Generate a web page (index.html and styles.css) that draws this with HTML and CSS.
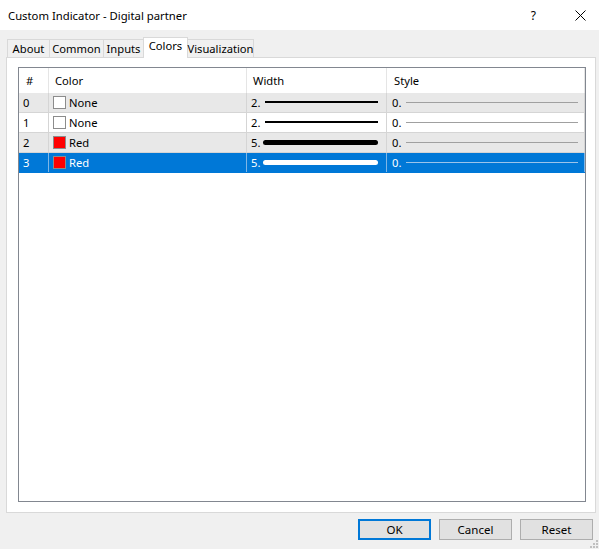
FILE: index.html
```html
<!DOCTYPE html>
<html>
<head>
<meta charset="utf-8">
<link rel="stylesheet" href="styles.css">
</head>
<body>
<div class="window">
  <div class="titlebar">
    <span class="title">Custom Indicator - Digital partner</span>
    <span class="help">?</span>
    <svg class="close" width="11" height="11" viewBox="0 0 11 11"><path d="M0.5 0.5 L10.5 10.5 M10.5 0.5 L0.5 10.5" stroke="#000" stroke-width="1" fill="none"/></svg>
  </div>
  <div class="body">
    <div class="tabs">
      <div class="tab t-about">About</div>
      <div class="tab t-common">Common</div>
      <div class="tab t-inputs">Inputs</div>
      <div class="tab t-colors active">Colors</div>
      <div class="tab t-vis">Visualization</div>
    </div>
    <div class="panel">
      <div class="list">
        <div class="row head">
          <div class="cell c-num">#</div>
          <div class="cell c-color">Color</div>
          <div class="cell c-width">Width</div>
          <div class="cell c-style">Style</div>
        </div>
        <div class="row alt">
          <div class="cell c-num">0</div>
          <div class="cell c-color"><span class="swatch none"></span>None</div>
          <div class="cell c-width"><span class="num">2.</span><span class="wline w2"></span></div>
          <div class="cell c-style"><span class="num">0.</span><span class="sline"></span></div>
        </div>
        <div class="row">
          <div class="cell c-num">1</div>
          <div class="cell c-color"><span class="swatch none"></span>None</div>
          <div class="cell c-width"><span class="num">2.</span><span class="wline w2"></span></div>
          <div class="cell c-style"><span class="num">0.</span><span class="sline"></span></div>
        </div>
        <div class="row alt">
          <div class="cell c-num">2</div>
          <div class="cell c-color"><span class="swatch red"></span>Red</div>
          <div class="cell c-width"><span class="num">5.</span><span class="wline w5"></span></div>
          <div class="cell c-style"><span class="num">0.</span><span class="sline"></span></div>
        </div>
        <div class="row selected">
          <div class="cell c-num">3</div>
          <div class="cell c-color"><span class="swatch red"></span>Red</div>
          <div class="cell c-width"><span class="num">5.</span><span class="wline w5"></span></div>
          <div class="cell c-style"><span class="num">0.</span><span class="sline"></span></div>
        </div>
      </div>
    </div>
    <div class="footer">
      <button class="btn default">OK</button>
      <button class="btn">Cancel</button>
      <button class="btn">Reset</button>
    </div>
  </div>
  <svg class="grip" width="8" height="8" viewBox="0 0 8 8">
    <rect x="6" y="0" width="2" height="2" fill="#c0c0c0"/>
    <rect x="3" y="3" width="2" height="2" fill="#c0c0c0"/>
    <rect x="6" y="3" width="2" height="2" fill="#c0c0c0"/>
    <rect x="0" y="6" width="2" height="2" fill="#c0c0c0"/>
    <rect x="3" y="6" width="2" height="2" fill="#c0c0c0"/>
    <rect x="6" y="6" width="2" height="2" fill="#c0c0c0"/>
  </svg>
</div>
</body>
</html>
```

FILE: styles.css
```css
* { box-sizing: border-box; }
html, body {
  margin: 0;
  padding: 0;
}
body {
  font-family: "Noto Sans", "DejaVu Sans", sans-serif;
  font-size: 11.2px;
  color: #000;
  background: #f0f0f0;
}
.window {
  position: relative;
  width: 599px;
  height: 549px;
  background: #f0f0f0;
}
.titlebar {
  height: 30px;
  background: #fff;
  display: flex;
  align-items: center;
  padding-left: 8px;
}
.title {
  font-size: 11.3px;
  flex: 1;
}
.help {
  margin-right: 39px;
  font-size: 12px;
}
.close {
  margin-right: 13px;
}
.body {
  padding: 7px 3px 0 6px;
}
.tabs {
  display: flex;
  align-items: flex-end;
  height: 20px;
  padding-left: 1px;
  position: relative;
  z-index: 1;
}
.tab {
  height: 18px;
  border: 1px solid #d9d9d9;
  border-bottom: none;
  border-right: none;
  background: #f0f0f0;
  display: flex;
  align-items: center;
  justify-content: center;
  line-height: 1;
  padding-top: 1px;
}
.t-about { width: 42px; }
.t-common { width: 54px; }
.t-inputs { width: 40px; }
.t-colors { width: 45px; }
.t-vis { width: 66px; border-right: 1px solid #d9d9d9; }
.tab.active {
  height: 21px;
  margin-bottom: -1px;
  background: #fff;
  border-right: 1px solid #d9d9d9;
  padding-top: 0;
  padding-bottom: 4px;
}
.tab.active + .tab { border-left: none; }
.panel {
  height: 456px;
  background: #fff;
  border: 1px solid #d9d9d9;
  padding: 9px 9px 10px 11px;
}
.list {
  height: 100%;
  border: 1px solid #828790;
  background: #fff;
}
.row {
  display: flex;
  height: 20px;
  border-bottom: 1px solid #d5d5d5;
  width: 566px;
}
.row.head {
  height: 25px;
  border-bottom: none;
}
.row.alt { background: #e8e8e8; }
.row.selected {
  background: #0078d7;
  color: #fff;
  border-bottom-color: #0078d7;
}
.cell {
  display: flex;
  align-items: center;
  border-right: 1px solid #d5d5d5;
  white-space: nowrap;
  padding-bottom: 1px;
}
.head .cell { border-right-color: #e5e5e5; padding-bottom: 0; }
.selected .cell { border-right-color: #7fb6e6; }
.c-num { width: 30px; padding-left: 4px; }
.head .c-num { padding-left: 7px; }
.c-color { width: 198px; padding-left: 4px; }
.head .c-color { padding-left: 6px; }
.c-width { width: 140px; padding-left: 4px; padding-right: 8px; }
.head .c-width { padding-left: 6px; }
.c-style { width: 198px; padding-left: 5px; padding-right: 6px; }
.head .c-style { padding-left: 7px; }
.swatch {
  width: 13px;
  height: 13px;
  border: 1px solid #8c8c8c;
  margin-right: 3px;
  flex: none;
}
.swatch.none { background: #fff; }
.swatch.red { background: #ff0000; }
.num { margin-right: 5px; }
.wline {
  flex: 1;
  background: #000;
}
.wline.w2 { height: 2px; }
.wline.w5 { height: 5px; border-radius: 3px; margin-left: -2px; }
.selected .wline { background: #fff; }
.sline {
  flex: 1;
  height: 1px;
  background: #a0a0a0;
}
.selected .sline { background: #9cc4ea; }
.footer {
  display: flex;
  justify-content: flex-end;
  gap: 8px;
  padding-top: 6px;
  padding-right: 3px;
}
.btn {
  width: 73px;
  height: 21px;
  font-family: inherit;
  font-size: 11.5px;
  color: #000;
  background: #e1e1e1;
  border: 1px solid #adadad;
  padding: 0;
  margin: 0;
}
.btn.default {
  border: 2px solid #0078d7;
}
.grip {
  position: absolute;
  right: 1px;
  bottom: 1px;
}
```
